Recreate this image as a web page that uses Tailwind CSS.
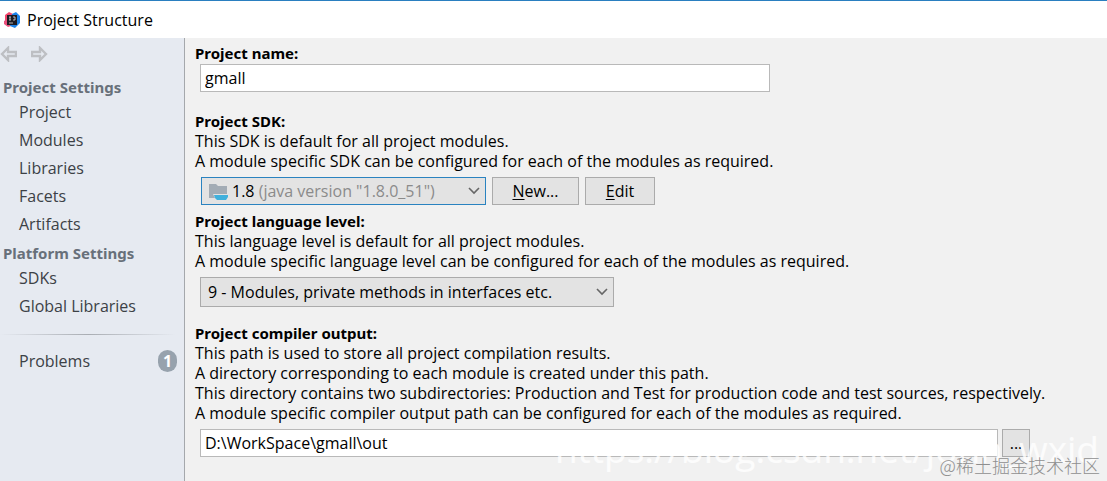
<!DOCTYPE html>
<html lang="en">
	<head>
		<meta charset="utf-8">
		<title>Project Structure</title>
		<script src="https://cdn.jsdelivr.net/npm/@tailwindcss/browser@4"></script>
	</head>
	<body class="relative flex flex-col min-h-screen overflow-x-hidden bg-[#f1f1f1] font-['Open_Sans','Noto_Sans_CJK_SC',sans-serif] text-base leading-5 text-black">
		<header class="flex items-center gap-[7px] h-[38px] pl-1 bg-white border-t border-[#2a7fc0]">
			<svg class="size-4" viewBox="0 0 16 16">
				<path d="M1 3l4-3 4 2-3 6-5 2z" fill="#f4486d" />
				<path d="M0 9l5-3 2 8-3 1-4-3z" fill="#e8507c" />
				<path d="M8 2l4-2 4 4v7l-5 5-5-2z" fill="#1c83ea" />
				<path d="M3 3h10v10H3z" fill="#1b1b22" />
				<path d="M5 5h2M6 5v3M5 8h2M9 5h2v3H9M5 11h4" stroke="#ddd" stroke-width=".8" fill="none" />
			</svg>
			<h1>Project Structure</h1>
		</header>
		<div class="flex flex-1">
			<nav class="w-[185px] shrink-0 pt-2 bg-[#e6eaf1] border-r border-[#a5a8ac] text-[#3c4146]">
				<div class="flex gap-3.5 h-4 mb-[15px] text-[#bdbfc3]">
					<button aria-label="Back"><svg class="w-[17px] h-4" viewBox="0 0 17 16" fill="none" stroke="currentColor" stroke-width="2.4"><path d="M2 8l6-6v4h8v4H8v4z" /></svg></button>
					<button aria-label="Forward"><svg class="w-[17px] h-4" viewBox="0 0 17 16" fill="none" stroke="currentColor" stroke-width="2.4"><path d="M15 8L9 2v4H1v4h8v4z" /></svg></button>
				</div>
				<h2 class="pl-[3px] pb-px font-['Noto_Sans',sans-serif] text-[15px] leading-5 font-bold text-[#68707a]">Project Settings</h2>
				<ul class="pl-[19px] leading-7">
					<li><a href="#project">Project</a></li>
					<li><a href="#modules">Modules</a></li>
					<li><a href="#libraries">Libraries</a></li>
					<li><a href="#facets">Facets</a></li>
					<li><a href="#artifacts">Artifacts</a></li>
				</ul>
				<h2 class="pl-[3px] pt-[5px] pb-px font-['Noto_Sans',sans-serif] text-[15px] leading-5 font-bold text-[#68707a]">Platform Settings</h2>
				<ul class="pl-[19px] leading-7">
					<li><a href="#sdks">SDKs</a></li>
					<li><a href="#global">Global Libraries</a></li>
				</ul>
				<div class="h-px mt-3.5 mb-3 mr-2 bg-linear-to-r from-transparent via-[#a9adb3] to-transparent"></div>
				<a href="#problems" class="flex items-center justify-between pl-[19px] pr-[7px] h-7">Problems
					<span class="flex items-center justify-center w-[19px] h-[22px] rounded-full bg-[#97a2ad] text-white font-bold">1</span>
				</a>
			</nav>
			<main class="flex-1 min-w-0 pt-[5px] pl-2.5 pr-4">
				<section>
					<h2 class="font-['Noto_Sans',sans-serif] text-[15px] leading-5 font-bold"><label for="name">Project name:</label></h2>
					<input id="name" type="text" value="gmall" class="block ml-[5px] mt-px w-[570px] h-7 px-1 bg-white border border-[#b9b9b9]">
				</section>
				<section class="mt-[19px]">
					<h2 class="font-['Noto_Sans',sans-serif] text-[15px] leading-5 font-bold"><label for="sdk">Project SDK:</label></h2>
					<p>This SDK is default for all project modules.</p>
					<p>A module specific SDK can be configured for each of the modules as required.</p>
					<div class="flex mt-1.5 pl-1.5 gap-1.5">
						<div class="relative w-[285px]">
							<select id="sdk" class="appearance-none block w-full h-7 bg-[#e3e3e3] border border-[#2a83c0] text-transparent"><option>1.8 (java version "1.8.0_51")</option></select>
							<div class="absolute inset-0 flex items-center pl-2 pr-1.5 pointer-events-none">
								<svg class="w-5 h-[18px] mr-[3px]" viewBox="0 0 20 18"><path d="M0 2h7l2 2h9v12H0z" fill="#a3acb5" /><path d="M4 12h15v3l-2 3H7z" fill="#e3e3e3" /><path d="M5 13h14v2l-2 3H8l-2-2z" fill="#40b0dc" /></svg>
								<span aria-hidden="true">1.8 <span class="text-[#8b8b8b]">(java version "1.8.0_51")</span></span>
								<svg class="ml-auto w-3 h-2" viewBox="0 0 12 8" fill="none" stroke="#666" stroke-width="1.6"><path d="M1 1l5 5 5-5" /></svg>
							</div>
						</div>
						<button class="w-[87px] h-7 bg-[#e3e3e3] border border-[#ababab]"><u class="underline-offset-2">N</u>ew...</button>
						<button class="w-[70px] h-7 bg-[#e3e3e3] border border-[#ababab]"><u class="underline-offset-2">E</u>dit</button>
					</div>
				</section>
				<section class="mt-1.5">
					<h2 class="font-['Noto_Sans',sans-serif] text-[15px] leading-5 font-bold"><label for="level">Project language level:</label></h2>
					<p>This language level is default for all project modules.</p>
					<p>A module specific language level can be configured for each of the modules as required.</p>
					<div class="relative ml-[5px] mt-1.5 w-[414px]">
						<select id="level" class="appearance-none block w-full h-[30px] pl-[7px] bg-[#e3e3e3] border border-[#ababab]"><option>9 - Modules, private methods in interfaces etc.</option></select>
						<svg class="absolute right-1.5 top-[11px] w-3 h-2 pointer-events-none" viewBox="0 0 12 8" fill="none" stroke="#666" stroke-width="1.6"><path d="M1 1l5 5 5-5" /></svg>
					</div>
				</section>
				<section class="mt-4">
					<h2 class="font-['Noto_Sans',sans-serif] text-[15px] leading-5 font-bold"><label for="output">Project compiler output:</label></h2>
					<p>This path is used to store all project compilation results.</p>
					<p>A directory corresponding to each module is created under this path.</p>
					<p>This directory contains two subdirectories: Production and Test for production code and test sources, respectively.</p>
					<p>A module specific compiler output path can be configured for each of the modules as required.</p>
					<div class="flex gap-1 mt-1.5 pl-[5px] pr-[61px]">
						<input id="output" type="text" value="D:\WorkSpace\gmall\out" class="flex-1 h-7 px-1 bg-white border border-[#b9b9b9]">
						<button aria-label="Browse" class="w-7 h-7 bg-[#e3e3e3] border border-[#ababab]">...</button>
					</div>
				</section>
			</main>
		</div>
		<!-- watermarks -->
		<div class="absolute right-2 bottom-3 text-[37px] leading-10 text-white/80 whitespace-nowrap pointer-events-none">https://blog.csdn.net/john_wxid</div>
		<div class="absolute right-[7px] bottom-1 font-['Noto_Sans_CJK_SC',sans-serif] font-light text-[18px] leading-6 text-[#8f8f8f] pointer-events-none">@稀土掘金技术社区</div>
	</body>
</html>
